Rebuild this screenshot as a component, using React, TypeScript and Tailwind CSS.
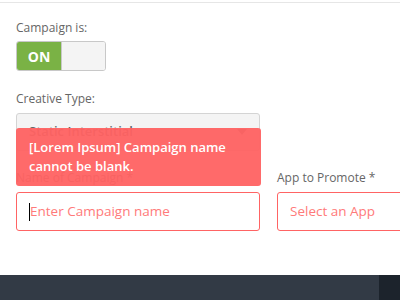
import React from "react";

export default function App() {
  return (
    <div
      className="relative w-[400px] h-[300px] overflow-hidden bg-white"
      style={{ fontFamily: '"Open Sans", "Liberation Sans", sans-serif' }}
    >
      <div className="h-[3px] border-b border-[#e6e6e6] bg-white"></div>
      <div className="pl-4 pt-[17px]">
        <div className="text-[12px] leading-[16px] text-[#666]">Campaign is:</div>
        <div className="mt-[5px] flex h-[30px] w-[90px] overflow-hidden rounded-[3px] border border-[#c8c8c8]">
          <div className="flex w-[44px] items-center justify-center bg-[#7ab245] text-[14px] font-bold text-white">ON</div>
          <div className="flex-1 border-l border-[#c8c8c8] bg-[#f4f4f4]"></div>
        </div>
        <div className="mt-[20px] text-[12px] leading-[16px] text-[#666]">Creative Type:</div>
        <div className="mt-[6px] flex h-[38px] w-[244px] items-center justify-between rounded-[3px] border border-[#d4d4d4] bg-[#f4f4f4] px-[12px]">
          <span className="text-[13px] font-semibold text-[#666]">Static Interstitial</span>
          <svg width="10" height="6" viewBox="0 0 10 6"><path d="M0 0 L10 0 L5 6 Z" fill="#777" /></svg>
        </div>
        <div className="mt-[19px] flex gap-[17px]">
          <div className="w-[244px] shrink-0">
            <div className="text-[12px] leading-[16px] text-[#666]">Name of Campaign *</div>
            <div className="mt-[6px] flex h-[39px] items-center rounded-[3px] border border-[#ff6464] px-[12px]">
              <span className="h-[18px] w-px bg-black"></span>
              <span className="text-[13.5px] text-[#ff7a7a]">Enter Campaign name</span>
            </div>
          </div>
          <div className="w-[200px] shrink-0">
            <div className="text-[12px] leading-[16px] text-[#666]">App to Promote *</div>
            <div className="mt-[6px] flex h-[39px] items-center rounded-[3px] border border-[#ff6464] px-[12px]">
              <span className="text-[13.5px] text-[#ff7a7a]">Select an App</span>
            </div>
          </div>
        </div>
      </div>
      <div className="absolute left-0 top-[275px] flex h-[25px] w-[400px]">
        <div className="w-[379px] bg-[#323a45]"></div>
        <div className="flex-1 bg-[#1c232c]"></div>
      </div>
      <div className="absolute left-[16px] top-[128px] h-[58px] w-[245px] rounded-[3px] bg-[#ff6262]/95 px-[13px] pt-[10px] text-[13px] font-semibold leading-[19px] text-white">
        [Lorem Ipsum] Campaign name
        <br />
        cannot be blank.
      </div>
    </div>
  );
}
